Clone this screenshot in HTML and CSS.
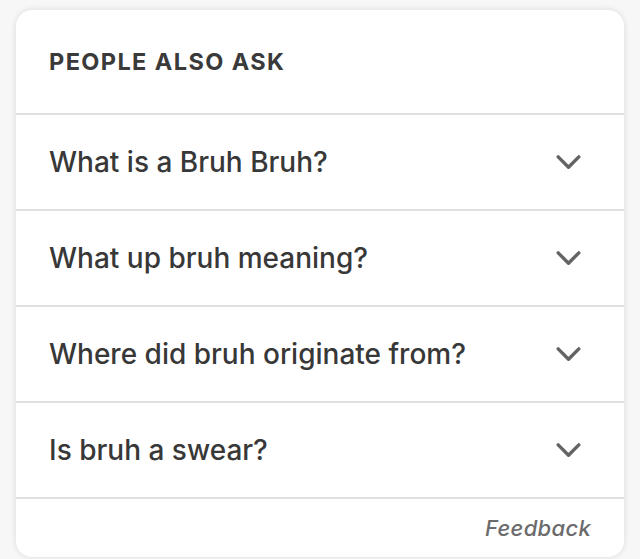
FILE: index.html
```html
<!DOCTYPE html>
<html>
<head>
<meta charset="utf-8">
<link rel="stylesheet" href="styles.css">
</head>
<body>
<div class="card">
  <div class="header">PEOPLE ALSO ASK</div>
  <div class="row"><span class="q">What is a Bruh Bruh?</span><svg class="chev" viewBox="0 0 26 16" width="25" height="15"><path d="M2 2 L13 13 L24 2" fill="none" stroke="#646464" stroke-width="3.6" stroke-linecap="round" stroke-linejoin="round"/></svg></div>
  <div class="row"><span class="q">What up bruh meaning?</span><svg class="chev" viewBox="0 0 26 16" width="25" height="15"><path d="M2 2 L13 13 L24 2" fill="none" stroke="#646464" stroke-width="3.6" stroke-linecap="round" stroke-linejoin="round"/></svg></div>
  <div class="row"><span class="q">Where did bruh originate from?</span><svg class="chev" viewBox="0 0 26 16" width="25" height="15"><path d="M2 2 L13 13 L24 2" fill="none" stroke="#646464" stroke-width="3.6" stroke-linecap="round" stroke-linejoin="round"/></svg></div>
  <div class="row"><span class="q">Is bruh a swear?</span><svg class="chev" viewBox="0 0 26 16" width="25" height="15"><path d="M2 2 L13 13 L24 2" fill="none" stroke="#646464" stroke-width="3.6" stroke-linecap="round" stroke-linejoin="round"/></svg></div>
  <div class="footer"><span class="fb">Feedback</span></div>
</div>
</body>
</html>
```

FILE: styles.css
```css
html, body {
  margin: 0;
  padding: 0;
  background: #f7f7f7;
}
body {
  width: 640px;
  height: 559px;
  overflow: hidden;
  padding-top: 10px;
  box-sizing: border-box;
  font-family: Inter, "Liberation Sans", sans-serif;
  color: #3a3a3a;
}
.card {
  margin: 0 16px;
  height: 547px;
  background: #fff;
  border-radius: 16px;
  box-shadow: 0 0 6px rgba(0,0,0,0.12);
  display: flex;
  flex-direction: column;
  overflow: hidden;
}
.header {
  height: 105px;
  flex: none;
  box-sizing: border-box;
  padding-left: 33px;
  padding-top: 38px;
  font-size: 23.5px;
  font-weight: 700;
  letter-spacing: 1.4px;
  color: #3a3a3a;
  border-bottom: 2px solid #e0e0e0;
  line-height: 28px;
}
.row {
  height: 96px;
  flex: none;
  box-sizing: border-box;
  border-bottom: 2px solid #e0e0e0;
  display: flex;
  align-items: center;
  justify-content: space-between;
  padding: 0 43px 0 33px;
}
.q {
  font-size: 28px;
  font-weight: 500;
  color: #383838;
}
.chev {
  display: block;
}
.footer {
  flex: 1;
  display: flex;
  justify-content: flex-end;
  align-items: center;
  padding-right: 33px;
}
.fb {
  font-size: 22px;
  font-style: italic;
  font-weight: 500;
  color: #6b6b6b;
  letter-spacing: 0.3px;
}
```
